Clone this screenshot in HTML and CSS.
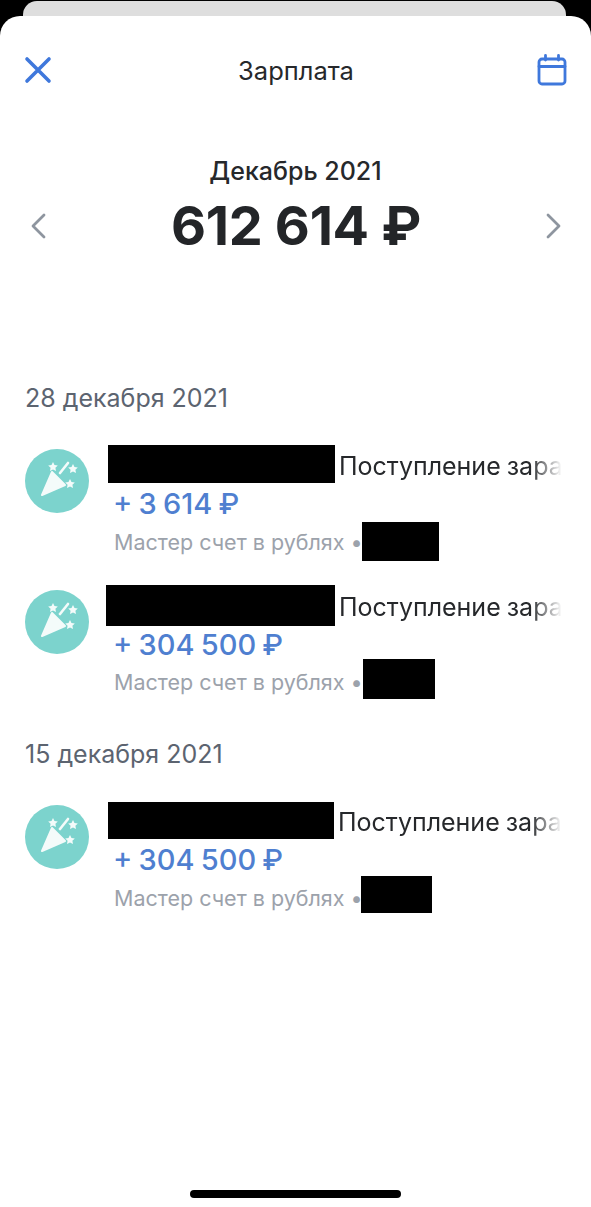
FILE: index.html
```html
<!DOCTYPE html>
<html lang="ru">
<head>
    <meta charset="UTF-8">
    <meta name="viewport" content="width=device-width, initial-scale=1.0">
    <title>Зарплата</title>
    <link rel="stylesheet" href="styles.css">
</head>
<body>
    <div class="back-sheet"></div>
    <div class="sheet">
        <header class="topbar">
            <svg class="icon-close" width="28" height="28" viewBox="0 0 28 28">
                <path d="M3 3L25 25M25 3L3 25" fill="none" stroke="#3f78dc" stroke-width="3.6" stroke-linecap="round"/>
            </svg>
            <div class="topbar-title">Зарплата</div>
            <svg class="icon-cal" width="30" height="32" viewBox="0 0 30 32">
                <rect x="2" y="5" width="26" height="25" rx="3" fill="none" stroke="#3f78dc" stroke-width="2.8"/>
                <path d="M2 12.5H28M8.5 1.5V6M21.5 1.5V6" fill="none" stroke="#3f78dc" stroke-width="2.8" stroke-linecap="round"/>
            </svg>
        </header>

        <section class="summary">
            <div class="month">Декабрь 2021</div>
            <div class="total-row">
                <svg class="chevron" width="16" height="26" viewBox="0 0 16 26">
                    <path d="M14 2L3 13L14 24" fill="none" stroke="#8e959f" stroke-width="2.8" stroke-linecap="round" stroke-linejoin="round"/>
                </svg>
                <div class="total">612 614 ₽</div>
                <svg class="chevron" width="16" height="26" viewBox="0 0 16 26">
                    <path d="M2 2L13 13L2 24" fill="none" stroke="#8e959f" stroke-width="2.8" stroke-linecap="round" stroke-linejoin="round"/>
                </svg>
            </div>
        </section>

        <div class="date date-first">28 декабря 2021</div>

        <div class="op op-1">
            <svg class="party" width="64" height="64" viewBox="0 0 64 64"><use href="#party-icon"/></svg>
            <div class="op-body">
                <div class="op-title"><span class="black name-1"></span><span class="op-text">Поступление заработной платы</span></div>
                <div class="op-amount">+ 3 614 ₽</div>
                <div class="op-sub">Мастер счет в рублях •<span class="black acc-1"></span></div>
            </div>
        </div>

        <div class="op op-2">
            <svg class="party" width="64" height="64" viewBox="0 0 64 64"><use href="#party-icon"/></svg>
            <div class="op-body">
                <div class="op-title"><span class="black name-2"></span><span class="op-text">Поступление заработной платы</span></div>
                <div class="op-amount">+ 304 500 ₽</div>
                <div class="op-sub">Мастер счет в рублях •<span class="black acc-2"></span></div>
            </div>
        </div>

        <div class="date date-second">15 декабря 2021</div>

        <div class="op op-3">
            <svg class="party" width="64" height="64" viewBox="0 0 64 64"><use href="#party-icon"/></svg>
            <div class="op-body">
                <div class="op-title"><span class="black name-3"></span><span class="op-text">Поступление заработной платы</span></div>
                <div class="op-amount">+ 304 500 ₽</div>
                <div class="op-sub">Мастер счет в рублях •<span class="black acc-3"></span></div>
            </div>
        </div>

        <div class="home-bar"></div>
    </div>

    <svg class="defs" width="0" height="0">
        <symbol id="party-icon" viewBox="0 0 64 64">
            <circle cx="32" cy="32" r="32" fill="#7cd3cd"/>
            <path d="M27 23L40 36L17 46Z" fill="#f4fbfa" stroke="#f4fbfa" stroke-width="2" stroke-linejoin="round"/>
            <path d="M35 24L43 14" stroke="#f4fbfa" stroke-width="2.6" stroke-linecap="round"/>
            <path d="M28 13l1.500 3 3.300.4-2.400 2.300.6 3.300-3-1.600-3 1.600.6-3.300-2.400-2.300 3.300-.4zM48 15l1.500 3 3.300.4-2.400 2.300.6 3.300-3-1.600-3 1.600.6-3.300-2.400-2.300 3.300-.4zM45 30l1.500 3 3.300.4-2.400 2.300.6 3.300-3-1.600-3 1.600.6-3.300-2.400-2.300 3.300-.4z" fill="#f4fbfa"/>
        </symbol>
    </svg>
</body>
</html>
```

FILE: styles.css
```css
* {
    box-sizing: border-box;
}
html, body {
    margin: 0;
    height: 100%;
}
body {
    position: relative;
    background: #000;
    font-family: Inter, "Noto Sans", sans-serif;
    overflow: hidden;
}
.defs {
    position: absolute;
}
.back-sheet {
    position: absolute;
    top: 1px;
    left: 23px;
    right: 25px;
    height: 40px;
    background: #dedede;
    border-radius: 14px 14px 0 0;
}
.sheet {
    position: absolute;
    top: 16px;
    left: 0;
    right: 0;
    bottom: 0;
    background: #fff;
    border-radius: 20px 20px 0 0;
    padding: 0 25px;
}
.topbar {
    display: flex;
    align-items: center;
    justify-content: space-between;
    height: 34px;
    margin-top: 37px;
}
.icon-close {
    margin-left: -1px;
}
.icon-cal {
    margin-right: -1px;
}
.topbar-title {
    font-size: 25.5px;
    color: #26282b;
    margin-left: 3px;
    margin-top: 0;
}
.summary {
    margin-top: 69px;
    text-align: center;
}
.month {
    font-size: 25px;
    font-weight: 500;
    line-height: 30px;
    color: #26282b;
}
.total-row {
    display: flex;
    align-items: center;
    justify-content: space-between;
    margin-top: 12px;
    padding: 0 4px 0 5px;
}
.total {
    font-size: 54px;
    font-weight: 700;
    line-height: 56px;
    color: #232528;
    letter-spacing: -0.3px;
}
.date {
    font-size: 25px;
    line-height: 30px;
    color: #5c6470;
}
.date-first {
    margin-top: 129px;
}
.date-second {
    margin-top: 27px;
}
.op {
    display: flex;
    align-items: flex-start;
    gap: 19px;
}
.op-1 {
    margin-top: 32px;
    height: 141px;
}
.op-2 {
    height: 126px;
}
.op-3 {
    margin-top: 32px;
    height: 122px;
}
.party {
    flex: none;
    margin-top: 4px;
}
.op-body {
    min-width: 0;
    width: 454px;
}
.op-title {
    display: flex;
    align-items: center;
    height: 38px;
    white-space: nowrap;
}
.op-text {
    flex: 1;
    min-width: 0;
    overflow: hidden;
    font-size: 25px;
    word-spacing: -1px;
    color: #26282b;
    margin-left: 4px;
    margin-top: 4px;
    -webkit-mask-image: linear-gradient(to right, #000 86%, transparent 100%);
    mask-image: linear-gradient(to right, #000 86%, transparent 100%);
}
.op-amount {
    font-size: 29px;
    font-weight: 500;
    line-height: 36px;
    word-spacing: -1.5px;
    color: #4f7fd0;
    margin-left: 5px;
    margin-top: 3px;
}
.op-sub {
    display: flex;
    align-items: center;
    height: 39px;
    font-size: 21.5px;
    color: #9ca2ab;
    margin-left: 6px;
    white-space: pre;
}
.op-2 .op-sub {
    margin-top: -1px;
}
.black {
    display: block;
    flex: none;
    background: #000;
}
.name-1 { width: 227px; height: 38px; }
.name-2 { width: 229px; height: 41px; margin-left: -2px; }
.name-3 { width: 226px; height: 37px; }
.acc-1 { width: 77px; height: 39px; margin-left: -1px; }
.acc-2 { width: 72px; height: 40px; margin-bottom: 6px; }
.acc-3 { width: 71px; height: 37px; margin-left: -2px; margin-bottom: 7px; }
.home-bar {
    position: absolute;
    left: 190px;
    bottom: 9px;
    width: 211px;
    height: 8px;
    border-radius: 4px;
    background: #000;
}
```
